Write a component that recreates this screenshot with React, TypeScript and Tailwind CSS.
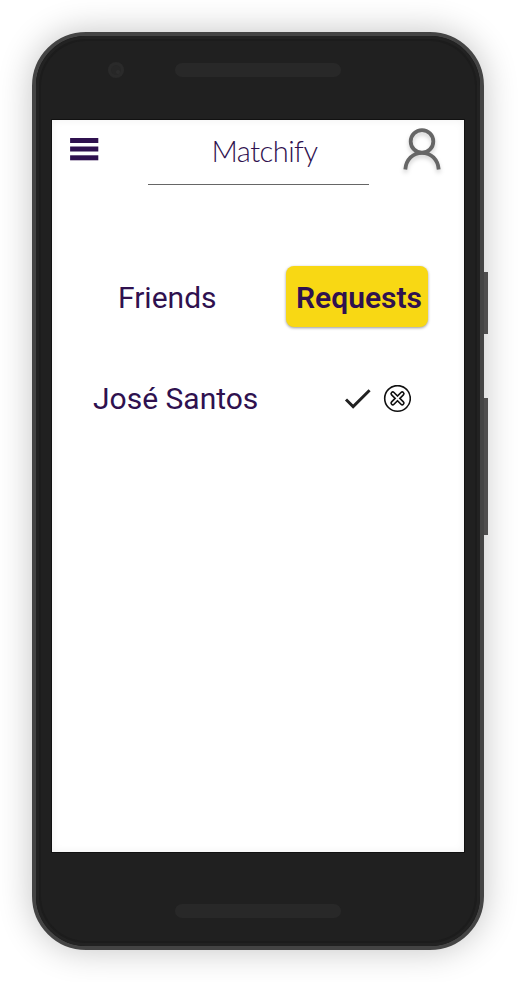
function MenuIcon() {
  return (
    <svg width="29" height="23" viewBox="0 0 29 23" fill="#2f114f">
      <rect x="0.1" y="0" width="28.2" height="5" />
      <rect x="0.1" y="8.5" width="28.2" height="5" />
      <rect x="0.1" y="17.3" width="28.2" height="5" />
    </svg>
  );
}

function ProfileIcon() {
  return (
    <svg
      className="overflow-visible drop-shadow-[0_3px_2px_rgba(0,0,0,0.18)]"
      width="38"
      height="43"
      viewBox="0 0 38 43"
      fill="none"
      stroke="#666666"
      strokeWidth="3.8"
    >
      <circle cx="19" cy="13.4" r="11.3" />
      <path d="M2.3 41.5C3 31.5 10 24.8 19 24.8S35 31.5 35.7 41.5" />
    </svg>
  );
}

function AcceptIcon() {
  return (
    <svg width="35" height="35" viewBox="0 0 24 24" fill="#212121">
      <path d="M9 16.17L4.83 12l-1.42 1.41L9 19 21 7l-1.41-1.41z" />
    </svg>
  );
}

function DeclineIcon() {
  return (
    <svg width="28" height="28" viewBox="0 0 28 28" fill="none" strokeLinecap="round">
      <circle cx="14.5" cy="13.4" r="12.8" stroke="#111" strokeWidth="1.6" />
      <path d="M9.8 8.7l9.4 9.4M19.2 8.7l-9.4 9.4" stroke="#111" strokeWidth="5" />
      <path d="M9.8 8.7l9.4 9.4M19.2 8.7l-9.4 9.4" stroke="#fff" strokeWidth="1.7" />
    </svg>
  );
}

function Speaker() {
  return <div className="h-3.5 w-[166px] rounded-full bg-[#282828]" />;
}

export default function App() {
  return (
    <div className="h-[982px] w-[520px] overflow-hidden bg-white p-8 font-['Roboto',sans-serif] text-[#2f114f]">
      <div className="relative flex h-[918px] w-[452px] flex-col items-center rounded-[54px] border-4 border-[#444] bg-[#202020] shadow-[0_0_34px_rgba(0,0,0,0.24)]">
        <div className="pointer-events-none absolute inset-0 rounded-[50px] shadow-[inset_0_0_0_3px_#222,inset_0_0_0_5px_#1c1c1c]" />
        <div className="absolute -right-2 top-[236px] h-[62px] w-1 bg-[#4f4e4e]" />
        <div className="absolute -right-2 top-[362px] h-[137px] w-1 bg-[#4f4e4e]" />

        <div className="relative flex h-[84px] w-full shrink-0 items-start justify-center pt-[27px]">
          <div className="absolute left-[72px] top-[26px] flex size-4 items-center justify-center rounded-full bg-[#2a2a2a]">
            <div className="flex size-2.5 items-end justify-end rounded-full bg-[#272727] p-px">
              <div className="size-1 rounded-full bg-[#2d2d2d]" />
            </div>
          </div>
          <Speaker />
        </div>

        <main className="relative h-[732px] w-[412px] shrink-0 bg-white shadow-[0_0_0_1px_#111,inset_0_0_9px_rgba(0,0,0,0.06)]">
          <header className="flex h-16 items-start justify-between pl-[18px] pr-[23px]">
            <button className="mt-[18px]" aria-label="Menu">
              <MenuIcon />
            </button>
            <h1 className="ml-[27px] mt-[11px] font-['Lato',sans-serif] text-[29px] font-light leading-10 tracking-[-0.5px]">
              Matchify
            </h1>
            <button className="mt-2" aria-label="Profile">
              <ProfileIcon />
            </button>
          </header>
          <div className="ml-24 h-px w-[221px] bg-[#666]" />

          <nav className="mt-[81px] flex items-center pl-[66px] text-[30px]">
            <button className="w-[168px] pt-0.5 text-left">Friends</button>
            <button className="h-[61px] w-[142px] whitespace-nowrap rounded-lg bg-[#f8d814] pl-[10px] pt-0.5 text-left font-semibold shadow-[0_1px_3px_rgba(0,0,0,0.4)]">
              Requests
            </button>
          </nav>

          <section className="mt-[54px] flex h-[35px] items-center pl-[41px] text-[30px]">
            <span className="w-[247px]">José Santos</span>
            <button aria-label="Accept">
              <AcceptIcon />
            </button>
            <button className="ml-2" aria-label="Decline">
              <DeclineIcon />
            </button>
          </section>
        </main>

        <div className="mt-[52px]">
          <Speaker />
        </div>
      </div>
    </div>
  );
}
